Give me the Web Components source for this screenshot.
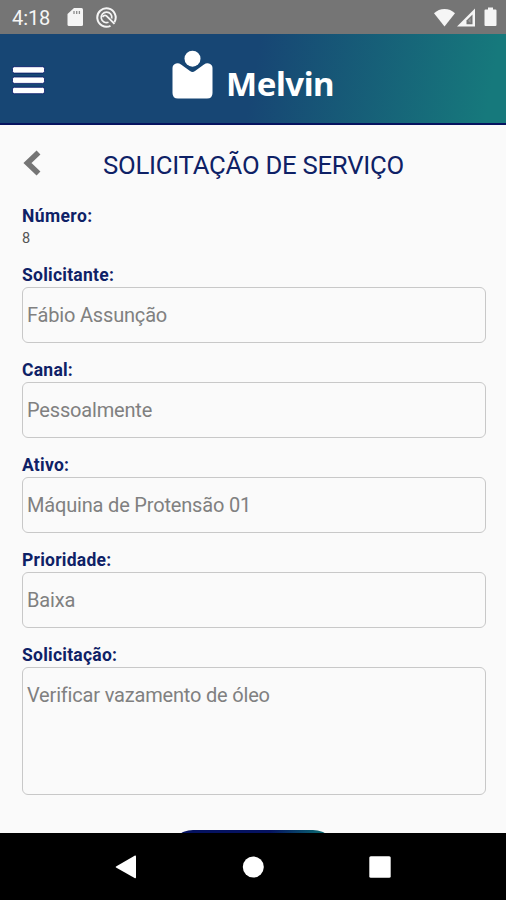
<!DOCTYPE html>
<html lang="pt-BR">
<head>
<meta charset="utf-8">
<meta name="viewport" content="width=device-width, initial-scale=1">
<title>Melvin</title>
<style>
    body {
        margin: 0;
        font-family: Roboto, sans-serif;
        background: #fafafa;
    }
</style>
</head>
<body>
<melvin-app>
    <status-bar slot="status" time="4:18"></status-bar>
    <app-header slot="header">Melvin</app-header>

    <page-title>SOLICITAÇÃO DE SERVIÇO</page-title>
    <info-line label="Número:">8</info-line>
    <form-field label="Solicitante:">Fábio Assunção</form-field>
    <form-field label="Canal:">Pessoalmente</form-field>
    <form-field label="Ativo:">Máquina de Protensão 01</form-field>
    <form-field label="Prioridade:">Baixa</form-field>
    <form-field label="Solicitação:" multiline>Verificar vazamento de óleo</form-field>
    <submit-button></submit-button>

    <nav-bar slot="nav"></nav-bar>
</melvin-app>

<script>
class MelvinApp extends HTMLElement {

    constructor() {
        super();
        this.shadowDOM = this.attachShadow({ mode: 'open' });
        this.shadowDOM.innerHTML = `
            <style>
                :host {
                    display: flex;
                    flex-direction: column;
                    height: 900px;
                    overflow: hidden;
                }
                main {
                    flex: 1;
                    min-height: 0;
                    overflow: hidden;
                    box-sizing: border-box;
                    padding: 20px 21px 0 21px;
                }
            </style>
            <slot name="status"></slot>
            <slot name="header"></slot>
            <main><slot></slot></main>
            <slot name="nav"></slot>
        `;
    }
}

class StatusBar extends HTMLElement {

    constructor() {
        super();
        this.shadowDOM = this.attachShadow({ mode: 'open' });
    }

    connectedCallback() {
        this.shadowDOM.innerHTML = `
            <style>
                :host {
                    display: flex;
                    flex: none;
                    align-items: center;
                    height: 34px;
                    box-sizing: border-box;
                    padding: 0 9px 0 12px;
                    background: #757575;
                    color: #f5f5f5;
                }
                .time {
                    width: 55px;
                    padding-top: 2px;
                    font-size: 20px;
                    line-height: 33px;
                    letter-spacing: -0.1px;
                }
                svg {
                    display: block;
                    fill: currentColor;
                }
                .sync {
                    margin-left: 12px;
                }
                .system {
                    display: flex;
                    align-items: center;
                    margin-left: auto;
                }
            </style>
            <span class="time">${this.getAttribute('time')}</span>
            <svg width="17" height="20" viewBox="0 0 17 20">
                <path d="M7 1h7.500q1.500 0 1.500 1.500v15q0 1.500-1.500 1.500h-12.500q-1.500 0-1.500-1.500v-10.500z"/>
                <path d="M7 4v3M9.700 4v3M12.400 4v3" stroke="#8c8c8c" stroke-width="1.300" fill="none"/>
            </svg>
            <svg class="sync" width="21" height="21" viewBox="0 0 21 21">
                <g fill="none" stroke="#f5f5f5">
                    <path d="M14.500 18.800A9.200 9.200 0 1 1 18.400 15.200" stroke-width="2"/>
                    <path d="M12.500 15.300A5.300 5.300 0 1 1 15.700 11.500" stroke-width="1.700"/>
                    <path d="M6.500 9.800q2.500-2.800 5 0l7 7" stroke-width="1.900"/>
                </g>
            </svg>
            <div class="system">
                <svg width="21" height="19" viewBox="0 0 21 19">
                    <path d="M10.500 18.500L0 5.300Q4.500 1 10.500 1T21 5.300z"/>
                </svg>
                <svg width="20" height="19" viewBox="0 0 20 19" style="margin-left: 1px">
                    <path d="M19 .5V18.500H1z"/>
                    <path d="M10.500 12.500L16.500 6.500V16.300H10.500z" fill="#757575"/>
                    <path d="M12.500 12.200L14.600 10V14.800L12.500 13.200z" fill="#9a9a9a"/>
                </svg>
                <svg width="13" height="20" viewBox="0 0 13 20" style="margin-left: 8px">
                    <path d="M4 0.500h5v2h2.500q1 0 1 1v14.500q0 1-1 1h-10q-1 0-1-1v-14.500q0-1 1-1H4z"/>
                </svg>
            </div>
        `;
    }
}

class AppHeader extends HTMLElement {

    constructor() {
        super();
        this.shadowDOM = this.attachShadow({ mode: 'open' });
        this.shadowDOM.innerHTML = `
            <style>
                :host {
                    display: grid;
                    grid-template-columns: 160px 1fr 160px;
                    flex: none;
                    height: 91px;
                    box-sizing: border-box;
                    border-bottom: 2px solid #06135f;
                    background: linear-gradient(100deg, #174674 0%, #174674 50%, #16797c 96%);
                    background-origin: border-box;
                    color: #fff;
                }
                svg {
                    display: block;
                    fill: #fff;
                }
                .menu {
                    align-self: start;
                    padding: 32px 0 0 12px;
                }
                .brand {
                    display: flex;
                    align-items: flex-start;
                    padding: 16px 0 0 12px;
                }
                .name {
                    margin: 11px 0 0 13px;
                    font: bold 33px/46px "Noto Sans", sans-serif;
                    letter-spacing: -0.450px;
                }
            </style>
            <div class="menu">
                <svg width="34" height="30" viewBox="0 0 34 30">
                    <g stroke="#071568" stroke-width=".8">
                        <rect x=".5" y="0.700" width="32" height="6.400" rx="1.800"/>
                        <rect x=".5" y="11" width="32" height="6.400" rx="1.800"/>
                        <rect x=".5" y="21.300" width="32" height="6.400" rx="1.800"/>
                    </g>
                </svg>
            </div>
            <div class="brand">
                <svg width="41" height="49" viewBox="0 0 41 49">
                    <circle cx="20.500" cy="8.700" r="8"/>
                    <path d="M4 13.500Q6.500 12.500 9 14.500L18 21Q20.500 23 23 21L32 14.500Q34.500 12.500 37 13.500Q40.500 14.500 40.500 18V43Q40.500 48.500 35 48.500H6Q.5 48.500 .5 43V18Q.5 14.500 4 13.500z"/>
                </svg>
                <span class="name"><slot></slot></span>
            </div>
        `;
    }
}

class PageTitle extends HTMLElement {

    constructor() {
        super();
        this.shadowDOM = this.attachShadow({ mode: 'open' });
        this.shadowDOM.innerHTML = `
            <style>
                :host {
                    display: flex;
                    align-items: center;
                    height: 40px;
                    color: #0e2166;
                }
                svg {
                    display: block;
                    margin: -5px 62px 0 2px;
                }
                h1 {
                    margin: 0;
                    font-size: 25.700px;
                    font-weight: 400;
                    line-height: 40px;
                    letter-spacing: -0.250px;
                    white-space: nowrap;
                }
            </style>
            <svg width="18" height="26" viewBox="0 0 18 26">
                <path d="M15.500 2.500L4.500 13L15.500 23.500" fill="none" stroke="#757575" stroke-width="5.600"/>
            </svg>
            <h1><slot></slot></h1>
        `;
    }
}

class InfoLine extends HTMLElement {

    constructor() {
        super();
        this.shadowDOM = this.attachShadow({ mode: 'open' });
    }

    connectedCallback() {
        this.shadowDOM.innerHTML = `
            <style>
                :host {
                    display: block;
                    height: 60px;
                    margin-top: 20px;
                    padding-left: 1px;
                }
                .label {
                    color: #0e2166;
                    font-size: 17.500px;
                    font-weight: 700;
                    line-height: 22px;
                    letter-spacing: 0.400px;
                }
                .value {
                    color: #555;
                    font-size: 14.500px;
                    line-height: 24px;
                }
            </style>
            <div class="label">${this.getAttribute('label')}</div>
            <div class="value"><slot></slot></div>
        `;
    }
}

class FormField extends HTMLElement {

    constructor() {
        super();
        this.shadowDOM = this.attachShadow({ mode: 'open' });
    }

    connectedCallback() {
        this.shadowDOM.innerHTML = `
            <style>
                :host {
                    display: block;
                    height: 95px;
                }
                :host([multiline]) {
                    height: 185px;
                }
                .label {
                    height: 22px;
                    padding-left: 1px;
                    color: #0e2166;
                    font-size: 17.500px;
                    font-weight: 700;
                    line-height: 21px;
                    letter-spacing: 0.250px;
                }
                .box {
                    height: 56px;
                    box-sizing: border-box;
                    margin: 0 -1px 0 0.500px;
                    padding: 0 4.500px;
                    border: 1.500px solid #c8c8c8;
                    border-radius: 6px;
                    color: #808080;
                    font-size: 20px;
                    line-height: 55px;
                    letter-spacing: -0.180px;
                }
                :host([multiline]) .box {
                    height: 128px;
                }
            </style>
            <div class="label">${this.getAttribute('label')}</div>
            <div class="box"><slot></slot></div>
        `;
    }
}

class SubmitButton extends HTMLElement {

    constructor() {
        super();
        this.shadowDOM = this.attachShadow({ mode: 'open' });
        this.shadowDOM.innerHTML = `
            <style>
                :host {
                    display: block;
                    width: 168px;
                    height: 52px;
                    margin: 0 auto;
                    border-radius: 24px;
                    background: linear-gradient(90deg, #051260 0%, #051260 60%, #0b6470 90%);
                }
            </style>
        `;
    }
}

class NavBar extends HTMLElement {

    constructor() {
        super();
        this.shadowDOM = this.attachShadow({ mode: 'open' });
        this.shadowDOM.innerHTML = `
            <style>
                :host {
                    display: flex;
                    flex: none;
                    align-items: center;
                    justify-content: center;
                    gap: 105px;
                    height: 67px;
                    background: #000;
                }
                svg {
                    display: block;
                    fill: #fff;
                }
            </style>
            <svg width="22" height="24" viewBox="0 0 22 24"><path d="M1 11.400L20 .6Q21 .3 21 1.500V22.300Q21 23.500 20 23.200L1 12.400Q.3 11.900 1 11.400z"/></svg>
            <svg width="22" height="22" viewBox="0 0 22 22"><circle cx="11.300" cy="11" r="10.500"/></svg>
            <svg width="22" height="22" viewBox="0 0 22 22"><rect x=".3" y=".3" width="21.400" height="21.400" rx="1.500"/></svg>
        `;
    }
}

customElements.define('melvin-app', MelvinApp);
customElements.define('status-bar', StatusBar);
customElements.define('app-header', AppHeader);
customElements.define('page-title', PageTitle);
customElements.define('info-line', InfoLine);
customElements.define('form-field', FormField);
customElements.define('submit-button', SubmitButton);
customElements.define('nav-bar', NavBar);
</script>
</body>
</html>
